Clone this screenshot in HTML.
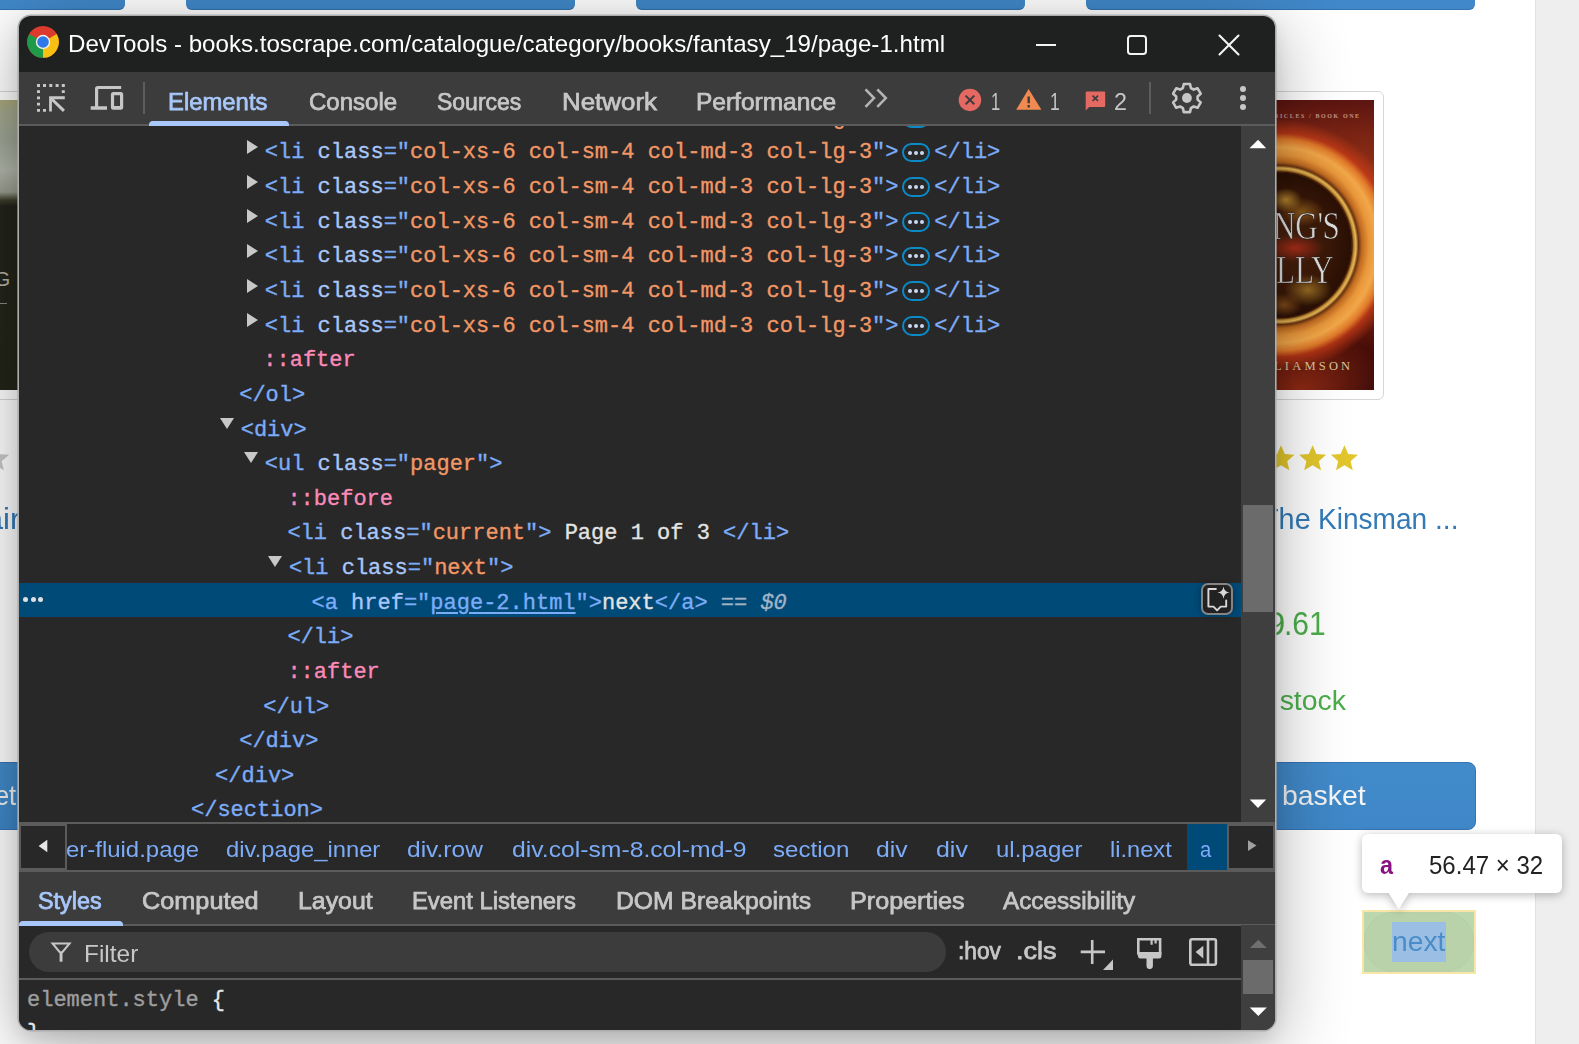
<!DOCTYPE html>
<html><head><meta charset="utf-8">
<style>
html,body{margin:0;padding:0;}
body{width:1579px;height:1044px;position:relative;overflow:hidden;background:#ffffff;font-family:"Liberation Sans",sans-serif;}
.a{position:absolute;}
.t{position:absolute;white-space:pre;transform-origin:0 0;}
/* page behind */
.gray{position:absolute;left:1535px;top:0;width:44px;height:1044px;background:#eeeeee;border-left:1px solid #e2e2e2;}
.topbtn{position:absolute;top:-20px;height:28.6px;background:#4088c9;border-bottom:1px solid #3072ae;border-radius:0 0 6px 6px;}
.frame{position:absolute;border:1.8px solid #d6d6d6;border-radius:6px;background:#fff;}
.btn{position:absolute;background:linear-gradient(#428bca,#3f87c8);border:1px solid #3574b2;border-radius:8px;}
/* devtools window */
#win{position:absolute;left:19px;top:16px;width:1256px;height:1014px;border-radius:12px;background:#1f2020;
  box-shadow:0 0 0 1.6px #adadad, 0 8px 18px rgba(0,0,0,0.10), 0 14px 70px 4px rgba(0,0,0,0.30);overflow:hidden;}
#win .p{position:absolute;}
.pill{display:inline-block;position:relative;width:23.8px;height:15.7px;border:2px solid #0b8ac8;border-radius:10px;vertical-align:-3.9px;margin:0 4.4px 0 3.6px;box-sizing:content-box;-webkit-text-stroke:0;}
.pill i{position:absolute;top:5.9px;width:4px;height:4px;border-radius:50%;background:#c9d8f2;}
.pill i:nth-child(1){left:3.5px}.pill i:nth-child(2){left:9.8px}.pill i:nth-child(3){left:16.3px}
.cr{position:absolute;white-space:pre;font-family:"Liberation Mono",monospace;font-size:22px;line-height:22px;-webkit-text-stroke:0.35px currentColor;}
.trr{position:absolute;width:0;height:0;border-top:7.9px solid transparent;border-bottom:7.9px solid transparent;border-left:11.7px solid #c8c8c8;}
.trd{position:absolute;width:0;height:0;border-left:7.75px solid transparent;border-right:7.75px solid transparent;border-top:11.5px solid #c8c8c8;}
</style></head><body>

<!-- ===== background page ===== -->
<div class="topbtn" style="left:-20px;width:144.5px"></div>
<div class="topbtn" style="left:185.5px;width:389.5px"></div>
<div class="topbtn" style="left:635.5px;width:389.5px"></div>
<div class="topbtn" style="left:1085.5px;width:389px"></div>
<div class="gray"></div>

<!-- right book frame + cover -->
<div class="frame" style="left:1230px;top:90.5px;width:152px;height:307px"></div>
<div class="a" style="left:1240px;top:100px;width:134px;height:290px;overflow:hidden;background:
 radial-gradient(circle at 39px 145px, rgba(0,0,0,0) 0, rgba(0,0,0,0) 72px, #3a1806 73px, #c08a30 75px, #e8b858 77px, #6a3410 79.5px, #c06a20 83px, #e8963a 90px, #f2a84a 98px, #e07a2a 106px, rgba(200,60,24,0.75) 112px, rgba(160,36,16,0) 126px),
 radial-gradient(ellipse 16px 12px at 46px 100px, rgba(220,170,60,0.75) 0, rgba(220,170,60,0) 100%),
 radial-gradient(ellipse 22px 14px at 62px 112px, rgba(200,140,40,0.55) 0, rgba(200,140,40,0) 100%),
 radial-gradient(ellipse 30px 14px at 55px 148px, rgba(210,50,30,0.7) 0, rgba(210,50,30,0) 100%),
 radial-gradient(ellipse 24px 16px at 68px 190px, rgba(210,160,50,0.6) 0, rgba(210,160,50,0) 100%),
 radial-gradient(ellipse 18px 12px at 44px 205px, rgba(190,120,40,0.55) 0, rgba(190,120,40,0) 100%),
 radial-gradient(circle at 39px 145px, #4a220e 0, #3a1808 50px, #2a1005 72px, rgba(0,0,0,0) 73px),
 radial-gradient(ellipse 90px 60px at 60px 290px, rgba(220,70,30,0.55) 0, rgba(200,40,20,0) 100%),
 linear-gradient(#5c1510 0, #7a2414 12%, #9a3416 30%, #8a2a12 60%, #4a0e08 85%, #300808 100%);">
  <div class="a" style="left:1px;top:106px;font-family:'Liberation Serif',serif;font-size:39px;line-height:40px;color:#dedede;transform:scaleX(0.8);transform-origin:0 0;-webkit-text-stroke:0.7px #2a1a10;letter-spacing:-0.5px">KING'S</div>
  <div class="a" style="left:36px;top:150px;font-family:'Liberation Serif',serif;font-size:39px;line-height:40px;color:#dedede;transform:scaleX(0.8);transform-origin:0 0;-webkit-text-stroke:0.7px #2a1a10">LLY</div>
  <div class="a" style="left:34px;top:259.5px;font-family:'Liberation Serif',serif;font-size:12.5px;line-height:12px;color:#d8c8a0;letter-spacing:3.2px">LIAMSON</div>
  <div class="a" style="left:34px;top:12px;font-family:'Liberation Serif',serif;font-size:6px;line-height:8px;color:#c89888;letter-spacing:1.6px;font-weight:700">NICLES / BOOK ONE</div>
</div>
<!-- left book sliver -->
<div class="frame" style="left:-140px;top:90.5px;width:170px;height:307px"></div>
<div class="a" style="left:-120px;top:100px;width:140px;height:290px;background:linear-gradient(#aaa87a 0,#a4a88e 12px,#9ea696 40px,#b2b6aa 70px,#9a9e90 92px,#40402e 100px,#23241a 106px,#242519 100%);"></div>
<div class="a" style="left:-6px;top:268px;font-size:21px;line-height:21px;color:#b4b4a8">G</div>
<div class="a" style="left:0;top:302.5px;width:6.5px;height:1.6px;background:#8a8a80"></div>
<!-- stars -->
<svg class="a" style="left:1230px;top:440px" width="140" height="40" viewBox="0 0 140 40">
 <path transform="translate(37.5 5.2)" d="M13.5 0 L17.3 8.9 L27 9.6 L19.7 16 L21.9 25 L13.5 20 L5.1 25 L7.3 16 L0 9.6 L9.7 8.9 Z" fill="#e2c62c"/>
 <path transform="translate(69.1 5.2)" d="M13.5 0 L17.3 8.9 L27 9.6 L19.7 16 L21.9 25 L13.5 20 L5.1 25 L7.3 16 L0 9.6 L9.7 8.9 Z" fill="#e2c62c"/>
 <path transform="translate(100.9 5.2)" d="M13.5 0 L17.3 8.9 L27 9.6 L19.7 16 L21.9 25 L13.5 20 L5.1 25 L7.3 16 L0 9.6 L9.7 8.9 Z" fill="#e2c62c"/>
</svg>
<svg class="a" style="left:-18.3px;top:440px" width="40" height="40" viewBox="0 0 40 40">
 <path transform="translate(0 5.2)" d="M13.5 0 L17.3 8.9 L27 9.6 L19.7 16 L21.9 25 L13.5 20 L5.1 25 L7.3 16 L0 9.6 L9.7 8.9 Z" fill="#c8c8c8"/>
</svg>
<div class='t' style='left:1317.66px;top:504.90px;font-family:"Liberation Sans";font-weight:400;font-size:29px;line-height:29px;color:#337ab7;transform:scaleX(0.9681);'>Kinsman ...</div><div class='t' style='left:1260.51px;top:504.90px;font-family:"Liberation Sans";font-weight:400;font-size:29px;line-height:29px;color:#337ab7;transform:scaleX(0.9938);'>The</div>
<div class='t' style='left:1284.07px;top:606.90px;font-family:"Liberation Sans";font-weight:400;font-size:33px;line-height:33px;color:#4cae4c;transform:scaleX(0.9098);'>.61</div><div class='t' style='left:1228.98px;top:606.90px;font-family:"Liberation Sans";font-weight:400;font-size:33px;line-height:33px;color:#4cae4c;transform:scaleX(1.0245);'>£39</div>
<div class='t' style='left:1247.89px;top:688.20px;font-family:"Liberation Sans";font-weight:400;font-size:27px;line-height:27px;color:#4cae4c;transform:scaleX(1.0538);'>In stock</div>
<div class='t' style='left:-53.57px;top:504.90px;font-family:"Liberation Sans";font-weight:400;font-size:29px;line-height:29px;color:#337ab7;transform:scaleX(1.0735);'>Chair</div>
<div class="btn" style="left:1100px;top:761.8px;width:374px;height:66.5px"></div>
<div class='t' style='left:1281.87px;top:782.00px;font-family:"Liberation Sans";font-weight:400;font-size:28px;line-height:28px;color:#f5f5f5;transform:scaleX(1.0148);'>basket</div>
<div class="btn" style="left:-300px;top:761.8px;width:340px;height:66.5px"></div>
<div class='t' style='left:-140.00px;top:782.00px;font-family:"Liberation Sans";font-weight:400;font-size:28px;line-height:28px;color:#f5f5f5;transform:scaleX(0.9123);'>Add to basket</div>

<!-- next highlight -->
<div class="a" style="left:1362px;top:910px;width:114px;height:63.6px;background:#f7e6a8;"></div>
<div class="a" style="left:1364px;top:912px;width:110px;height:59.6px;background:#bcd6ae;"></div>
<div class="a" style="left:1364px;top:912px;width:110px;height:59.6px;border-radius:30px;background:#b9d2aa;box-shadow:inset 0 0 1px rgba(0,0,0,0.08)"></div>
<div class="a" style="left:1392.1px;top:922.1px;width:53.8px;height:39.7px;background:#9bbfe4;"></div>
<div class='t' style='left:1391.58px;top:927.80px;font-family:"Liberation Sans";font-weight:400;font-size:28px;line-height:28px;color:#4a8cc8;transform:scaleX(1.0078);'>next</div>

<!-- tooltip -->
<div class="a" style="left:1350px;top:825px;width:230px;height:100px;filter:drop-shadow(0 2px 5px rgba(0,0,0,0.28))">
  <div class="a" style="left:12px;top:9px;width:200.2px;height:58.7px;background:#fff;border-radius:6px;"></div>
  <svg class="a" style="left:30px;top:60px" width="40" height="30" viewBox="0 0 40 30"><path d="M3.7 0 L34 0 L18.7 24.3 Z" fill="#fff"/></svg>
</div>
<div class='t' style='left:1379.70px;top:851.70px;font-family:"Liberation Sans";font-weight:700;font-size:26px;line-height:26px;color:#881280;transform:scaleX(0.9000);'>a</div>
<div class='t' style='left:1429.08px;top:851.70px;font-family:"Liberation Sans";font-weight:400;font-size:26px;line-height:26px;color:#222222;transform:scaleX(0.9238);'>56.47 × 32</div>

<!-- ===== devtools window ===== -->
<div id="win"><div class="p" style="left:-19px;top:-16px;width:1579px;height:1044px">
  <!-- title bar -->
  <svg class="p" style="left:27px;top:26px" width="32" height="32" viewBox="0 0 32 32">
    <circle cx="16" cy="16" r="15.8" fill="#db3a2c"/>
    <path d="M16 16 L2.3 8.1 A15.8 15.8 0 0 0 16 31.8 Z" fill="#1e9a48"/>
    <path d="M16 16 L16 31.8 A15.8 15.8 0 0 0 29.7 8.1 Z" fill="#f8c013"/>
    <path d="M16 8.1 L29.7 8.1 A15.8 15.8 0 0 0 2.3 8.1 Z" fill="#db3a2c"/>
    <circle cx="16" cy="16" r="7.2" fill="#f1f1f1"/>
    <circle cx="16" cy="16" r="5.8" fill="#2f78e8"/>
  </svg>
  <div class='t' style='left:67.92px;top:32.60px;font-family:"Liberation Sans";font-weight:400;font-size:23.2px;line-height:23.2px;color:#ffffff;transform:scaleX(1.0405);'>DevTools - books.toscrape.com/catalogue/category/books/fantasy_19/page-1.html</div>
  <div class="p" style="left:1036px;top:43.8px;width:20.2px;height:2px;background:#f4f4f4"></div>
  <div class="p" style="left:1127px;top:35.1px;width:19.8px;height:19.8px;border:2px solid #f4f4f4;border-radius:3.8px;box-sizing:border-box"></div>
  <svg class="p" style="left:1218px;top:34px" width="22" height="22" viewBox="0 0 22 22"><path d="M1.5 1.5 L20.5 20.5 M20.5 1.5 L1.5 20.5" stroke="#f4f4f4" stroke-width="2.1" stroke-linecap="round"/></svg>

  <!-- toolbar -->
  <div class="p" style="left:0;top:72px;width:1300px;height:52px;background:#3c3c3c"></div>
  <div class="p" style="left:0;top:124px;width:1300px;height:2px;background:#5b5b5b"></div>
  <svg class="p" style="left:36px;top:83px" width="32" height="32" viewBox="0 0 32 32" fill="#c7c7c7">
    <path d="M1 1.1 h3 v2.8 h-3 z M7 1.1 h3 v2.8 h-3 z M13.3 1.1 h3 v2.8 h-3 z M19.6 1.1 h3 v2.8 h-3 z M25.8 1.1 h3 v2.8 h-3 z"/>
    <path d="M1 7.2 h3 v2.8 h-3 z M1 13.5 h3 v2.8 h-3 z M1 19.8 h3 v2.8 h-3 z M1 25.9 h3 v2.8 h-3 z M7 25.9 h3 v2.8 h-3 z M25.8 7.2 h3 v2.8 h-3 z"/>
    <path d="M13.1 13.3 h15.7 v2.9 h-10.8 l11 10.6 l-2.1 2.1 l-11 -10.6 v10.3 h-2.8 z"/>
  </svg>
  <svg class="p" style="left:90px;top:85px" width="36" height="28" viewBox="0 0 36 28" fill="#c7c7c7">
    <path d="M5 22 V3.8 A2.8 2.8 0 0 1 7.8 1.1 H31.2 V3.9 H8.2 V22 Z"/>
    <path d="M0.7 21.3 H17 V24.8 H0.7 Z"/>
    <path d="M23.4 7 H30.7 A2.5 2.5 0 0 1 33.2 9.5 V22.3 A2.5 2.5 0 0 1 30.7 24.8 H23.4 A2.5 2.5 0 0 1 20.9 22.3 V9.5 A2.5 2.5 0 0 1 23.4 7 Z M24.1 10.2 V20.9 H30 V10.2 Z" fill-rule="evenodd"/>
  </svg>
  <div class="p" style="left:143px;top:82px;width:2px;height:31.8px;background:#5d5d5d"></div>
  <div class='t' style='left:168.06px;top:90.00px;font-family:"Liberation Sans";font-weight:400;font-size:24.6px;line-height:24.6px;color:#a8c7fa;transform:scaleX(0.9700);-webkit-text-stroke:0.75px currentColor;'>Elements</div><div class='t' style='left:308.52px;top:90.00px;font-family:"Liberation Sans";font-weight:400;font-size:24.6px;line-height:24.6px;color:#c7c7c7;transform:scaleX(0.9773);-webkit-text-stroke:0.75px currentColor;'>Console</div><div class='t' style='left:436.67px;top:90.00px;font-family:"Liberation Sans";font-weight:400;font-size:24.6px;line-height:24.6px;color:#c7c7c7;transform:scaleX(0.9348);-webkit-text-stroke:0.75px currentColor;'>Sources</div><div class='t' style='left:561.59px;top:90.00px;font-family:"Liberation Sans";font-weight:400;font-size:24.6px;line-height:24.6px;color:#c7c7c7;transform:scaleX(1.0534);-webkit-text-stroke:0.75px currentColor;'>Network</div><div class='t' style='left:696.01px;top:90.00px;font-family:"Liberation Sans";font-weight:400;font-size:24.6px;line-height:24.6px;color:#c7c7c7;transform:scaleX(0.9957);-webkit-text-stroke:0.75px currentColor;'>Performance</div>
  <div class="p" style="left:149px;top:121px;width:140px;height:5px;background:#a8c7fa;border-radius:4px 4px 0 0"></div>
  <svg class="p" style="left:864px;top:88px" width="27" height="21" viewBox="0 0 27 21"><path d="M1.5 1.3 L10 10.1 L1.5 18.9 M13.3 1.3 L21.8 10.1 L13.3 18.9" stroke="#b4b4b4" stroke-width="2.6" fill="none"/></svg>
  <svg class="p" style="left:958px;top:88px" width="24" height="24" viewBox="0 0 24 24"><circle cx="11.95" cy="11.9" r="11.25" fill="#e46962"/><path d="M7.6 7.6 L16.3 16.3 M16.3 7.6 L7.6 16.3" stroke="#3c3c3c" stroke-width="2"/></svg>
  <div class='t' style='left:991.25px;top:89.80px;font-family:"Liberation Sans";font-weight:400;font-size:24.6px;line-height:24.6px;color:#c7c7c7;transform:scaleX(0.6727);'>1</div>
  <svg class="p" style="left:1016px;top:88px" width="27" height="23" viewBox="0 0 27 23"><path d="M12.6 1 L25.4 21.8 L0.2 21.8 Z" fill="#f08a50"/><path d="M11.5 8.5 h2.4 v6.8 h-2.4 z M11.5 17 h2.4 v2.4 h-2.4 z" fill="#3c3c3c"/></svg>
  <div class='t' style='left:1049.78px;top:89.80px;font-family:"Liberation Sans";font-weight:400;font-size:24.6px;line-height:24.6px;color:#c7c7c7;transform:scaleX(0.7091);'>1</div>
  <svg class="p" style="left:1085px;top:91px" width="22" height="20" viewBox="0 0 22 20"><path d="M0.7 1.4 a1 1 0 0 1 1 -1 h17.5 a1 1 0 0 1 1 1 v13.5 a1 1 0 0 1 -1 1 h-15 l-3.5 3.6 z" fill="#e46962"/><path d="M7.6 4.6 L13 10 M13 4.6 L7.6 10" stroke="#3c3c3c" stroke-width="1.7"/></svg>
  <div class='t' style='left:1113.85px;top:89.80px;font-family:"Liberation Sans";font-weight:400;font-size:24.6px;line-height:24.6px;color:#c7c7c7;transform:scaleX(0.9500);'>2</div>
  <div class="p" style="left:1149px;top:82px;width:2px;height:31.6px;background:#5d5d5d"></div>
  <svg class="p" style="left:1171px;top:82px" width="32" height="32" viewBox="0 0 32 32">
    <path d="M12.8 2 h6.2 l0.9 4 l2.8 1.6 l3.9 -1.3 l3.1 5.4 l-3.1 2.8 v3.1 l3.1 2.8 l-3.1 5.4 l-3.9 -1.3 l-2.8 1.6 l-0.9 4 h-6.2 l-0.9 -4 l-2.8 -1.6 l-3.9 1.3 l-3.1 -5.4 l3.1 -2.8 v-3.1 l-3.1 -2.8 l3.1 -5.4 l3.9 1.3 l2.8 -1.6 z" fill="none" stroke="#c7c7c7" stroke-width="2.6" stroke-linejoin="round"/>
    <circle cx="15.9" cy="16" r="4.9" fill="#c7c7c7"/>
  </svg>
  <div class="p" style="left:1240px;top:86px;width:6px;height:6px;border-radius:50%;background:#c7c7c7"></div>
  <div class="p" style="left:1240px;top:95px;width:6px;height:6px;border-radius:50%;background:#c7c7c7"></div>
  <div class="p" style="left:1240px;top:104px;width:6px;height:6px;border-radius:50%;background:#c7c7c7"></div>

  <!-- code area -->
  <div class="p" style="left:19px;top:126px;width:1222px;height:696px;background:#282828;overflow:hidden">
    <div class="p" style="left:0;top:457px;width:1222px;height:34px;background:#004a77"></div>
    <div class="p" style="left:4.3px;top:470.5px;width:5px;height:5px;border-radius:50%;background:#e0e0e0"></div>
    <div class="p" style="left:11.5px;top:470.5px;width:5px;height:5px;border-radius:50%;background:#e0e0e0"></div>
    <div class="p" style="left:18.7px;top:470.5px;width:5px;height:5px;border-radius:50%;background:#e0e0e0"></div>
    <div class='cr' style='left:245.80px;top:-18.14px'><span style='color:#7cacf8;'>&lt;li </span><span style='color:#a8c7fa;'>class</span><span style='color:#7cacf8;'>="</span><span style='color:#f29766;'>col-xs-6 col-sm-4 col-md-3 col-lg-3</span><span style='color:#7cacf8;'>"&gt;</span><span class='pill'><i></i><i></i><i></i></span><span style='color:#7cacf8;'>&lt;/li&gt;</span></div>
<div class='cr' style='left:245.80px;top:16.49px'><span style='color:#7cacf8;'>&lt;li </span><span style='color:#a8c7fa;'>class</span><span style='color:#7cacf8;'>="</span><span style='color:#f29766;'>col-xs-6 col-sm-4 col-md-3 col-lg-3</span><span style='color:#7cacf8;'>"&gt;</span><span class='pill'><i></i><i></i><i></i></span><span style='color:#7cacf8;'>&lt;/li&gt;</span></div>
<div class='trr' style='left:227.50px;top:14.10px'></div>
<div class='cr' style='left:245.80px;top:51.12px'><span style='color:#7cacf8;'>&lt;li </span><span style='color:#a8c7fa;'>class</span><span style='color:#7cacf8;'>="</span><span style='color:#f29766;'>col-xs-6 col-sm-4 col-md-3 col-lg-3</span><span style='color:#7cacf8;'>"&gt;</span><span class='pill'><i></i><i></i><i></i></span><span style='color:#7cacf8;'>&lt;/li&gt;</span></div>
<div class='trr' style='left:227.50px;top:48.73px'></div>
<div class='cr' style='left:245.80px;top:85.75px'><span style='color:#7cacf8;'>&lt;li </span><span style='color:#a8c7fa;'>class</span><span style='color:#7cacf8;'>="</span><span style='color:#f29766;'>col-xs-6 col-sm-4 col-md-3 col-lg-3</span><span style='color:#7cacf8;'>"&gt;</span><span class='pill'><i></i><i></i><i></i></span><span style='color:#7cacf8;'>&lt;/li&gt;</span></div>
<div class='trr' style='left:227.50px;top:83.36px'></div>
<div class='cr' style='left:245.80px;top:120.38px'><span style='color:#7cacf8;'>&lt;li </span><span style='color:#a8c7fa;'>class</span><span style='color:#7cacf8;'>="</span><span style='color:#f29766;'>col-xs-6 col-sm-4 col-md-3 col-lg-3</span><span style='color:#7cacf8;'>"&gt;</span><span class='pill'><i></i><i></i><i></i></span><span style='color:#7cacf8;'>&lt;/li&gt;</span></div>
<div class='trr' style='left:227.50px;top:117.99px'></div>
<div class='cr' style='left:245.80px;top:155.01px'><span style='color:#7cacf8;'>&lt;li </span><span style='color:#a8c7fa;'>class</span><span style='color:#7cacf8;'>="</span><span style='color:#f29766;'>col-xs-6 col-sm-4 col-md-3 col-lg-3</span><span style='color:#7cacf8;'>"&gt;</span><span class='pill'><i></i><i></i><i></i></span><span style='color:#7cacf8;'>&lt;/li&gt;</span></div>
<div class='trr' style='left:227.50px;top:152.62px'></div>
<div class='cr' style='left:245.80px;top:189.64px'><span style='color:#7cacf8;'>&lt;li </span><span style='color:#a8c7fa;'>class</span><span style='color:#7cacf8;'>="</span><span style='color:#f29766;'>col-xs-6 col-sm-4 col-md-3 col-lg-3</span><span style='color:#7cacf8;'>"&gt;</span><span class='pill'><i></i><i></i><i></i></span><span style='color:#7cacf8;'>&lt;/li&gt;</span></div>
<div class='trr' style='left:227.50px;top:187.25px'></div>
<div class='cr' style='left:244.30px;top:224.27px'><span style='color:#fb8ab8;'>::after</span></div>
<div class='cr' style='left:220.20px;top:258.90px'><span style='color:#7cacf8;'>&lt;/ol&gt;</span></div>
<div class='cr' style='left:221.70px;top:293.53px'><span style='color:#7cacf8;'>&lt;div&gt;</span></div>
<div class='trd' style='left:201.00px;top:291.50px'></div>
<div class='cr' style='left:245.80px;top:328.16px'><span style='color:#7cacf8;'>&lt;ul </span><span style='color:#a8c7fa;'>class</span><span style='color:#7cacf8;'>="</span><span style='color:#f29766;'>pager</span><span style='color:#7cacf8;'>"&gt;</span></div>
<div class='trd' style='left:225.10px;top:326.13px'></div>
<div class='cr' style='left:268.40px;top:362.79px'><span style='color:#fb8ab8;'>::before</span></div>
<div class='cr' style='left:268.40px;top:397.42px'><span style='color:#7cacf8;'>&lt;li </span><span style='color:#a8c7fa;'>class</span><span style='color:#7cacf8;'>="</span><span style='color:#f29766;'>current</span><span style='color:#7cacf8;'>"&gt;</span><span style='color:#e3e3e3;'> Page 1 of 3 </span><span style='color:#7cacf8;'>&lt;/li&gt;</span></div>
<div class='cr' style='left:269.90px;top:432.05px'><span style='color:#7cacf8;'>&lt;li </span><span style='color:#a8c7fa;'>class</span><span style='color:#7cacf8;'>="</span><span style='color:#f29766;'>next</span><span style='color:#7cacf8;'>"&gt;</span></div>
<div class='trd' style='left:249.20px;top:430.02px'></div>
<div class='cr' style='left:292.50px;top:466.68px'><span style='color:#7cacf8;'>&lt;a </span><span style='color:#a8c7fa;'>href</span><span style='color:#7cacf8;'>="</span><span style='color:#7cacf8;text-decoration:underline;text-underline-offset:3px'>page-2.html</span><span style='color:#7cacf8;'>"&gt;</span><span style='color:#e3e3e3;'>next</span><span style='color:#7cacf8;'>&lt;/a&gt;</span><span style='color:#a0b4c8;'> == </span><span style='color:#a0b4c8;font-style:italic'>$0</span></div>
<div class='cr' style='left:268.40px;top:501.31px'><span style='color:#7cacf8;'>&lt;/li&gt;</span></div>
<div class='cr' style='left:268.40px;top:535.94px'><span style='color:#fb8ab8;'>::after</span></div>
<div class='cr' style='left:244.30px;top:570.57px'><span style='color:#7cacf8;'>&lt;/ul&gt;</span></div>
<div class='cr' style='left:220.20px;top:605.20px'><span style='color:#7cacf8;'>&lt;/div&gt;</span></div>
<div class='cr' style='left:196.10px;top:639.83px'><span style='color:#7cacf8;'>&lt;/div&gt;</span></div>
<div class='cr' style='left:172.00px;top:674.46px'><span style='color:#7cacf8;'>&lt;/section&gt;</span></div>
    <div class="p" style="left:1182.3px;top:457.4px;width:31.4px;height:31.4px;border:2px solid #858585;border-radius:7px;background:#222222;box-sizing:border-box;box-shadow:0 0 6px rgba(0,0,0,0.35)"></div>
    <svg class="p" style="left:1182px;top:457px" width="32" height="32" viewBox="0 0 32 32"><path d="M14.9 6 H7.4 V23.6 H12.5 L16.1 27.3 L19.7 23.6 H25.2 V17.4" fill="none" stroke="#d8d8d8" stroke-width="1.9" stroke-linejoin="round" stroke-linecap="round"/><path d="M22.5 3.4 Q23.2 9 28.7 9.6 Q23.2 10.2 22.5 15.8 Q21.8 10.2 16.3 9.6 Q21.8 9 22.5 3.4 Z" fill="#d8d8d8"/></svg>
  </div>
  <div class="p" style="left:1241px;top:126px;width:40px;height:696px;background:#3f3f3f"></div>
  <svg class="p" style="left:1248px;top:138px" width="20" height="12" viewBox="0 0 20 12"><path d="M1.5 10.2 L10.1 1.7 L18.2 10.2 Z" fill="#ffffff"/></svg>
  <div class="p" style="left:1243px;top:505px;width:30.3px;height:106.7px;background:#6b6b6b"></div>
  <svg class="p" style="left:1248px;top:798px" width="20" height="12" viewBox="0 0 20 12"><path d="M1.8 1.5 L18.2 1.5 L10 9.9 Z" fill="#ffffff"/></svg>

  <!-- breadcrumb bar -->
  <div class="p" style="left:0;top:822px;width:1300px;height:2px;background:#5b5b5b"></div>
  <div class="p" style="left:0;top:824px;width:1300px;height:46px;background:#282828"></div>
  <div class="p" style="left:19.3px;top:824px;width:47.5px;height:46px;border:2px solid #5b5b5b;box-sizing:border-box;background:#282828"></div>
  <svg class="p" style="left:36px;top:838px" width="14" height="16" viewBox="0 0 14 16"><path d="M11.3 1.7 L11.3 14.3 L2.6 8 Z" fill="#e6e6e6"/></svg>
  <div class="p" style="left:1187.2px;top:824px;width:39.8px;height:46px;background:#004a77"></div>
  <div class='t' style='left:65.94px;top:839.00px;font-family:"Liberation Sans";font-weight:400;font-size:22.5px;line-height:22.5px;color:#7cacf8;transform:scaleX(1.0642);'>er-fluid.page</div><div class='t' style='left:225.54px;top:839.00px;font-family:"Liberation Sans";font-weight:400;font-size:22.5px;line-height:22.5px;color:#7cacf8;transform:scaleX(1.0572);'>div.page_inner</div><div class='t' style='left:407.21px;top:839.00px;font-family:"Liberation Sans";font-weight:400;font-size:22.5px;line-height:22.5px;color:#7cacf8;transform:scaleX(1.0899);'>div.row</div><div class='t' style='left:512.30px;top:839.00px;font-family:"Liberation Sans";font-weight:400;font-size:22.5px;line-height:22.5px;color:#7cacf8;transform:scaleX(1.0986);'>div.col-sm-8.col-md-9</div><div class='t' style='left:773.33px;top:839.00px;font-family:"Liberation Sans";font-weight:400;font-size:22.5px;line-height:22.5px;color:#7cacf8;transform:scaleX(1.0710);'>section</div><div class='t' style='left:876.40px;top:839.00px;font-family:"Liberation Sans";font-weight:400;font-size:22.5px;line-height:22.5px;color:#7cacf8;transform:scaleX(1.0964);'>div</div><div class='t' style='left:935.89px;top:839.00px;font-family:"Liberation Sans";font-weight:400;font-size:22.5px;line-height:22.5px;color:#7cacf8;transform:scaleX(1.1071);'>div</div><div class='t' style='left:995.94px;top:839.00px;font-family:"Liberation Sans";font-weight:400;font-size:22.5px;line-height:22.5px;color:#7cacf8;transform:scaleX(1.0637);'>ul.pager</div><div class='t' style='left:1110.15px;top:839.00px;font-family:"Liberation Sans";font-weight:400;font-size:22.5px;line-height:22.5px;color:#7cacf8;transform:scaleX(1.0500);'>li.next</div><div class='t' style='left:1200.10px;top:839.00px;font-family:"Liberation Sans";font-weight:400;font-size:22.5px;line-height:22.5px;color:#7cacf8;transform:scaleX(0.9000);'>a</div>
  <div class="p" style="left:1227px;top:824px;width:48px;height:46px;border:2px solid #5b5b5b;box-sizing:border-box;background:#282828"></div>
  <svg class="p" style="left:1245px;top:838px" width="14" height="14" viewBox="0 0 14 14"><path d="M3 2.3 L3 13 L11.5 7.6 Z" fill="#a0a0a0"/></svg>
  <div class="p" style="left:0;top:870px;width:1300px;height:2px;background:#5b5b5b"></div>

  <!-- styles tabs -->
  <div class="p" style="left:0;top:872px;width:1300px;height:53px;background:#3c3c3c"></div>
  <div class='t' style='left:38.10px;top:890.40px;font-family:"Liberation Sans";font-weight:400;font-size:23.5px;line-height:23.5px;color:#a8c7fa;transform:scaleX(0.9952);-webkit-text-stroke:0.75px currentColor;'>Styles</div><div class='t' style='left:141.92px;top:890.40px;font-family:"Liberation Sans";font-weight:400;font-size:23.5px;line-height:23.5px;color:#c7c7c7;transform:scaleX(1.0755);-webkit-text-stroke:0.75px currentColor;'>Computed</div><div class='t' style='left:297.88px;top:890.40px;font-family:"Liberation Sans";font-weight:400;font-size:23.5px;line-height:23.5px;color:#c7c7c7;transform:scaleX(1.0588);-webkit-text-stroke:0.75px currentColor;'>Layout</div><div class='t' style='left:411.78px;top:890.40px;font-family:"Liberation Sans";font-weight:400;font-size:23.5px;line-height:23.5px;color:#c7c7c7;transform:scaleX(1.0119);-webkit-text-stroke:0.75px currentColor;'>Event Listeners</div><div class='t' style='left:615.50px;top:890.40px;font-family:"Liberation Sans";font-weight:400;font-size:23.5px;line-height:23.5px;color:#c7c7c7;transform:scaleX(1.0514);-webkit-text-stroke:0.75px currentColor;'>DOM Breakpoints</div><div class='t' style='left:849.56px;top:890.40px;font-family:"Liberation Sans";font-weight:400;font-size:23.5px;line-height:23.5px;color:#c7c7c7;transform:scaleX(1.0702);-webkit-text-stroke:0.75px currentColor;'>Properties</div><div class='t' style='left:1003.40px;top:890.40px;font-family:"Liberation Sans";font-weight:400;font-size:23.5px;line-height:23.5px;color:#c7c7c7;transform:scaleX(1.0328);-webkit-text-stroke:0.75px currentColor;'>Accessibility</div>
  <div class="p" style="left:123px;top:924px;width:1200px;height:2px;background:#5b5b5b"></div>
  <div class="p" style="left:19px;top:921.2px;width:104px;height:4.8px;background:#a8c7fa;border-radius:4px 4px 0 0"></div>

  <!-- filter bar -->
  <div class="p" style="left:0;top:926px;width:1241px;height:52.4px;background:#282828"></div>
  <div class="p" style="left:28.9px;top:932px;width:917px;height:40px;border-radius:20px;background:#3c3c3c"></div>
  <svg class="p" style="left:50px;top:941px" width="22" height="22" viewBox="0 0 22 22"><path d="M2.5 2.4 H19.6 L12.3 11.2 H9.8 Z" fill="none" stroke="#c7c7c7" stroke-width="2" stroke-linejoin="miter"/><path d="M9.6 11 H12.5 V20.7 H9.6 Z" fill="#c7c7c7"/></svg>
  <div class='t' style='left:83.86px;top:942.40px;font-family:"Liberation Sans";font-weight:400;font-size:24px;line-height:24px;color:#c7c7c7;transform:scaleX(1.0176);'>Filter</div>
  <div class='t' style='left:958.02px;top:940.40px;font-family:"Liberation Sans";font-weight:400;font-size:23px;line-height:23px;color:#c7c7c7;transform:scaleX(0.9878);-webkit-text-stroke:0.75px currentColor;'>:hov</div><div class='t' style='left:1016.34px;top:940.40px;font-family:"Liberation Sans";font-weight:400;font-size:23px;line-height:23px;color:#c7c7c7;transform:scaleX(1.1781);-webkit-text-stroke:0.75px currentColor;'>.cls</div>
  <svg class="p" style="left:1080px;top:939px" width="36" height="32" viewBox="0 0 36 32"><path d="M12.2 1 V25 M0.7 12.9 H25" stroke="#c7c7c7" stroke-width="2.6"/><path d="M33 31 V20.5 L23 31 Z" fill="#c7c7c7"/></svg>
  <svg class="p" style="left:1136px;top:937px" width="28" height="32" viewBox="0 0 28 32"><path d="M2.3 2.3 h21.8 v14 h-21.8 z" fill="none" stroke="#c7c7c7" stroke-width="2.6"/><path d="M1 15 h24.4 v4 a2.5 2.5 0 0 1 -2.5 2.5 h-6 v7.4 a3.2 3.2 0 0 1 -6.4 0 v-7.4 h-6 a2.5 2.5 0 0 1 -2.5 -2.5 z" fill="#c7c7c7"/><path d="M15.6 2 v5.8 M19.6 2 v4.6" stroke="#c7c7c7" stroke-width="2.2"/></svg>
  <svg class="p" style="left:1188px;top:937px" width="30" height="31" viewBox="0 0 30 31"><rect x="2.3" y="2.3" width="25.6" height="25.4" rx="1.6" fill="none" stroke="#c7c7c7" stroke-width="2.6"/><path d="M20 2 V28" stroke="#c7c7c7" stroke-width="2.6"/><path d="M15.3 8.8 V21.4 L7.6 15.1 Z" fill="#c7c7c7"/></svg>
  <div class="p" style="left:0;top:978.2px;width:1241px;height:1.8px;background:#5b5b5b"></div>
  <div class="p" style="left:0;top:980px;width:1241px;height:60px;background:#282828"></div>
  <div class="cr" style="left:27px;top:989.5px;color:#9e9e9e">element.style <span style="color:#e8e8e8">{</span></div>
  <div class="cr" style="left:27px;top:1023px;color:#e8e8e8">}</div>
  <div class="p" style="left:1241px;top:925.4px;width:40px;height:120px;background:#3f3f3f"></div>
  <svg class="p" style="left:1248px;top:938px" width="20" height="12" viewBox="0 0 20 12"><path d="M2 10 L10.3 1.8 L18.8 10 Z" fill="#6f6f6f"/></svg>
  <div class="p" style="left:1243px;top:960px;width:30.3px;height:33.7px;background:#6b6b6b"></div>
  <svg class="p" style="left:1248px;top:1006px" width="20" height="12" viewBox="0 0 20 12"><path d="M1.8 1.5 L18.8 1.5 L10.3 10 Z" fill="#ffffff"/></svg>
</div></div>
</body></html>
